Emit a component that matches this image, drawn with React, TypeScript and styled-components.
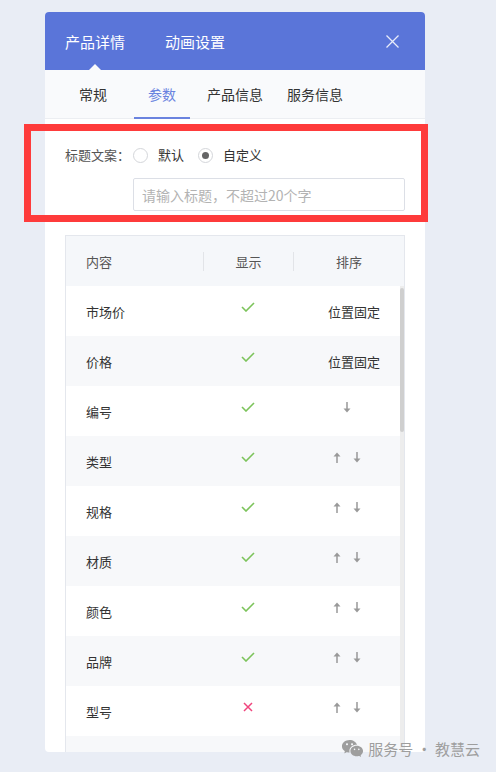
import React from "react";
import styled, { createGlobalStyle, css } from "styled-components";
import { RiWechatFill } from "react-icons/ri";

const GlobalStyle = createGlobalStyle`
  html, body {
    margin: 0;
    padding: 0;
    background: #e9edf5;
  }
  body {
    font-family: "Noto Sans CJK SC", "Noto Sans", sans-serif;
  }
  * { box-sizing: border-box; }
`;

const Page = styled.div`
  position: relative;
  width: 496px;
  height: 772px;
  padding: 12px 0 0 45px;
  overflow: hidden;
  background: #e9edf5;
`;

const Panel = styled.div`
  width: 380px;
  height: 740px;
  background: #fff;
  border-radius: 4px;
  overflow: hidden;
  display: flex;
  flex-direction: column;
`;

const Header = styled.div`
  height: 58px;
  flex-shrink: 0;
  background: #5a75d9;
  display: flex;
  align-items: stretch;
  padding: 0 26px 0 20px;
`;

const HeaderTab = styled.div<{ $active?: boolean }>`
  position: relative;
  display: flex;
  align-items: center;
  color: #fff;
  font-size: 15px;
  margin-right: 40px;
  ${(p) =>
    p.$active &&
    css`
      &::after {
        content: "";
        position: absolute;
        bottom: 0;
        left: 50%;
        margin-left: -6px;
        border-left: 6px solid transparent;
        border-right: 6px solid transparent;
        border-bottom: 6px solid #f9fafc;
      }
    `}
`;

const CloseButton = styled.div`
  margin-left: auto;
  display: flex;
  align-items: center;
`;

const TabBar = styled.div`
  height: 49px;
  flex-shrink: 0;
  background: #f9fafc;
  border-bottom: 1px solid #eceef2;
  display: flex;
  align-items: stretch;
  padding-left: 34px;
`;

const SubTab = styled.div<{ $active?: boolean; $gap: number }>`
  position: relative;
  display: flex;
  align-items: center;
  font-size: 14px;
  color: ${(p) => (p.$active ? "#6a83df" : "#333")};
  margin-right: ${(p) => p.$gap}px;
  ${(p) =>
    p.$active &&
    css`
      &::after {
        content: "";
        position: absolute;
        left: -14px;
        right: -14px;
        bottom: -1px;
        height: 2px;
        background: #6a83df;
      }
    `}
`;

const Form = styled.div`
  flex-shrink: 0;
  display: grid;
  grid-template-columns: 68px 1fr;
  row-gap: 13px;
  align-items: center;
  padding: 26px 20px 24px 20px;
`;

const Label = styled.div`
  font-size: 13px;
  line-height: 20px;
  color: #555;
  white-space: nowrap;
`;

const RadioGroup = styled.div`
  display: flex;
  align-items: center;
`;

const RadioOption = styled.label`
  display: flex;
  align-items: center;
  margin-right: 14px;
  font-size: 13px;
  line-height: 20px;
  color: #333;
`;

const RadioCircle = styled.span<{ $checked?: boolean }>`
  position: relative;
  width: 15px;
  height: 15px;
  border-radius: 50%;
  border: 1px solid #d4d6da;
  background: #fff;
  margin-right: 10px;
  ${(p) =>
    p.$checked &&
    css`
      &::after {
        content: "";
        position: absolute;
        left: 3px;
        top: 3px;
        width: 7px;
        height: 7px;
        border-radius: 50%;
        background: #666;
      }
    `}
`;

const TitleInput = styled.input`
  grid-column: 2;
  height: 33px;
  width: 100%;
  border: 1px solid #dcdfe6;
  border-radius: 2px;
  padding: 0 8px;
  font-family: inherit;
  font-size: 14px;
  color: #333;
  outline: none;
  &::placeholder {
    color: #b3b3b3;
  }
`;

const Table = styled.div`
  flex: 1;
  min-height: 0;
  margin: 0 20px;
  border: 1px solid #e4e7ed;
  border-bottom: none;
  display: flex;
  flex-direction: column;
  overflow: hidden;
`;

const THead = styled.div`
  height: 50px;
  flex-shrink: 0;
  background: #f5f7fa;
  display: flex;
  align-items: center;
`;

const HeadCell = styled.div<{ $w: number; $first?: boolean }>`
  width: ${(p) => p.$w}px;
  font-size: 13px;
  color: #555;
  text-align: ${(p) => (p.$first ? "left" : "center")};
  padding-left: ${(p) => (p.$first ? 20 : 0)}px;
`;

const HeadDivider = styled.div`
  width: 1px;
  height: 19px;
  background: #e2e4e8;
`;

const TBody = styled.div`
  flex: 1;
  min-height: 0;
  display: flex;
`;

const Rows = styled.div`
  flex: 1;
  display: flex;
  flex-direction: column;
`;

const Row = styled.div<{ $alt?: boolean }>`
  height: 50px;
  flex-shrink: 0;
  display: flex;
  align-items: center;
  background: ${(p) => (p.$alt ? "#f7f8fa" : "#fff")};
`;

const NameCell = styled.div`
  width: 137px;
  padding-left: 20px;
  font-size: 13px;
  color: #333;
`;

const ShowCell = styled.div`
  width: 90px;
  display: flex;
  justify-content: center;
  align-items: center;
`;

const SortCell = styled.div`
  width: 107px;
  display: flex;
  justify-content: center;
  align-items: center;
  gap: 12px;
`;

const FixedText = styled.span`
  font-size: 13px;
  color: #333;
  margin-left: 15px;
`;

const IconSvg = styled.svg`
  display: block;
  transform: translateY(-4px);
`;

const ScrollTrack = styled.div`
  width: 4px;
  flex-shrink: 0;
  background: #ededed;
  padding-top: 2px;
`;

const ScrollThumb = styled.div`
  height: 144px;
  border-radius: 2px;
  background: #cfcfcf;
`;

const Annotation = styled.div`
  position: absolute;
  left: 24px;
  top: 124px;
  width: 404px;
  height: 98px;
  border: 7px solid #fe3b3b;
  pointer-events: none;
`;

const Watermark = styled.div`
  position: absolute;
  right: 16px;
  bottom: 12px;
  display: flex;
  align-items: center;
  gap: 4px;
  color: #9e9e9e;
  font-size: 15px;
  line-height: 20px;
`;

const Check = () => (
  <IconSvg width="14" height="10" viewBox="0 0 14 10">
    <path d="M1 5 L5 9 L13 1" fill="none" stroke="#7cc35b" strokeWidth="1.6" />
  </IconSvg>
);

const Cross = () => (
  <IconSvg width="10" height="10" viewBox="0 0 10 10">
    <path d="M1 1 L9 9 M9 1 L1 9" fill="none" stroke="#f0457d" strokeWidth="1.5" />
  </IconSvg>
);

const ArrowUp = () => (
  <IconSvg width="8" height="11" viewBox="0 0 8 11">
    <path d="M4 3 V11" stroke="#999" strokeWidth="1.5" />
    <path d="M0.5 4.5 L4 0.5 L7.5 4.5 Z" fill="#999" />
  </IconSvg>
);

const ArrowDown = () => (
  <IconSvg width="8" height="11" viewBox="0 0 8 11">
    <path d="M4 0 V8" stroke="#999" strokeWidth="1.5" />
    <path d="M0.5 6.5 L4 10.5 L7.5 6.5 Z" fill="#999" />
  </IconSvg>
);

type Item = { name: string; show: boolean; sort: "fixed" | "down" | "both" | "none" };

const items: Item[] = [
  { name: "市场价", show: true, sort: "fixed" },
  { name: "价格", show: true, sort: "fixed" },
  { name: "编号", show: true, sort: "down" },
  { name: "类型", show: true, sort: "both" },
  { name: "规格", show: true, sort: "both" },
  { name: "材质", show: true, sort: "both" },
  { name: "颜色", show: true, sort: "both" },
  { name: "品牌", show: true, sort: "both" },
  { name: "型号", show: false, sort: "both" },
];

const subTabs = [
  { label: "常规", gap: 41 },
  { label: "参数", gap: 31, active: true },
  { label: "产品信息", gap: 24 },
  { label: "服务信息", gap: 0 },
];

export default function App() {
  return (
    <Page>
      <GlobalStyle />
      <Panel>
        <Header>
          <HeaderTab $active>产品详情</HeaderTab>
          <HeaderTab>动画设置</HeaderTab>
          <CloseButton>
            <svg width="13" height="13" viewBox="0 0 13 13">
              <path d="M0.5 0.5 L12.5 12.5 M12.5 0.5 L0.5 12.5" stroke="#e8ecfa" strokeWidth="1.3" fill="none" />
            </svg>
          </CloseButton>
        </Header>
        <TabBar>
          {subTabs.map((t) => (
            <SubTab key={t.label} $active={t.active} $gap={t.gap}>
              {t.label}
            </SubTab>
          ))}
        </TabBar>
        <Form>
          <Label>标题文案：</Label>
          <RadioGroup>
            <RadioOption>
              <RadioCircle />
              默认
            </RadioOption>
            <RadioOption>
              <RadioCircle $checked />
              自定义
            </RadioOption>
          </RadioGroup>
          <TitleInput placeholder="请输入标题，不超过20个字" />
        </Form>
        <Table>
          <THead>
            <HeadCell $w={137} $first>内容</HeadCell>
            <HeadDivider />
            <HeadCell $w={89}>显示</HeadCell>
            <HeadDivider />
            <HeadCell $w={110}>排序</HeadCell>
          </THead>
          <TBody>
            <Rows>
              {items.map((it, i) => (
                <Row key={it.name} $alt={i % 2 === 1}>
                  <NameCell>{it.name}</NameCell>
                  <ShowCell>{it.show ? <Check /> : <Cross />}</ShowCell>
                  <SortCell>
                    {it.sort === "fixed" && <FixedText>位置固定</FixedText>}
                    {it.sort === "down" && <ArrowDown />}
                    {it.sort === "both" && (
                      <>
                        <ArrowUp />
                        <ArrowDown />
                      </>
                    )}
                  </SortCell>
                </Row>
              ))}
              <Row $alt />
            </Rows>
            <ScrollTrack>
              <ScrollThumb />
            </ScrollTrack>
          </TBody>
        </Table>
      </Panel>
      <Annotation />
      <Watermark>
        <RiWechatFill size={23} />
        服务号 · 教慧云
      </Watermark>
    </Page>
  );
}
